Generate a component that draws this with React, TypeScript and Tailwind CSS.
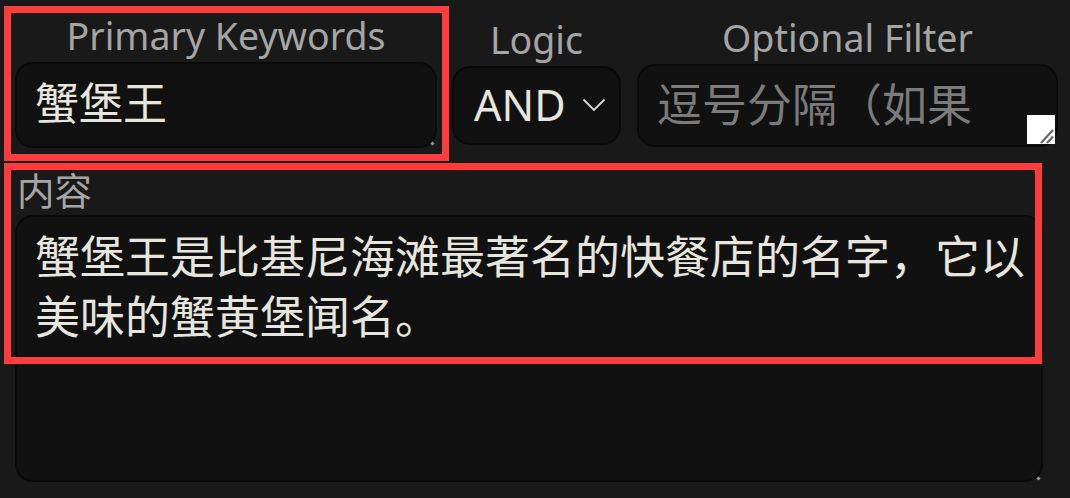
import React from 'react'

const font = { fontFamily: '"Noto Sans", "Noto Sans CJK SC", sans-serif' }

function ResizeDot({ className }: { className: string }) {
  return <div className={`absolute w-[3px] h-[3px] rotate-45 bg-[#9a9a9a] ${className}`} />
}

export default function App() {
  return (
    <div className="relative w-[1070px] h-[498px] bg-[#191919] overflow-hidden" style={font}>
      <div className="flex flex-col pl-[15px] pt-[14px]">
        {/* Top row */}
        <div className="flex items-center">
          <div className="flex flex-col w-[422px]">
            <div className="text-[37.5px] leading-[44px] text-[#a5a5a5] text-center">Primary Keywords</div>
            <div className="relative mt-[4px]">
              <textarea
                readOnly
                value="蟹堡王"
                className="block w-[422px] h-[86px] resize-none overflow-hidden rounded-[18px] border-2 border-[#0a0a0a] bg-[#111111] pl-[18px] pr-[18px] pt-[9px] text-[44px] leading-[60px] text-[#e6e6de] outline-none"
                style={font}
              />
              <ResizeDot className="right-[3px] bottom-[3px]" />
            </div>
          </div>

          <div className="flex flex-col w-[169px] ml-[15px]">
            <div className="text-[37.5px] leading-[44px] text-[#a5a5a5] text-center">Logic</div>
            <div className="mt-[4px] flex items-center justify-between h-[79px] rounded-[18px] border-2 border-[#0a0a0a] bg-[#111111] pl-[20px] pr-[13px]">
              <span className="text-[43px] leading-[60px] text-[#e6e6de]">AND</span>
              <svg width="24" height="14" viewBox="0 0 24 14" fill="none">
                <path d="M1.5 1.5 L12 12 L22.5 1.5" stroke="#d8d8d8" strokeWidth="1.8" />
              </svg>
            </div>
          </div>

          <div className="flex flex-col w-[421px] ml-[16px]">
            <div className="text-[37.5px] leading-[44px] text-[#a5a5a5] text-center">Optional Filter</div>
            <div className="relative mt-[4px] h-[83px] rounded-[18px] border-2 border-[#0a0a0a] bg-[#111111] pl-[18px] pr-[60px] pt-[9px]">
              <textarea
                readOnly
                placeholder="逗号分隔（如果有多个）"
                className="block w-full h-[60px] resize-none overflow-hidden bg-transparent p-0 text-[45px] leading-[60px] text-[#e6e6de] placeholder:text-[#7b7b7b] outline-none"
                style={font}
              />
              <div className="absolute right-[1px] bottom-[1px] w-[28px] h-[29px] bg-white">
                <svg width="28" height="29" viewBox="0 0 28 29" className="block">
                  <path d="M14 28 L26 15" stroke="#666666" strokeWidth="2.2" />
                  <path d="M20 28 L26 21.5" stroke="#666666" strokeWidth="2.2" />
                </svg>
              </div>
            </div>
          </div>
        </div>

        {/* Content */}
        <div className="flex flex-col mt-[21px] w-[1028px]">
          <div className="pl-[2px] text-[37.5px] leading-[44px] text-[#a5a5a5]">内容</div>
          <div className="relative mt-[2px]">
            <textarea
              readOnly
              value="蟹堡王是比基尼海滩最著名的快餐店的名字，它以美味的蟹黄堡闻名。"
              className="block w-[1028px] h-[267px] resize-none overflow-hidden rounded-[18px] border-2 border-[#0a0a0a] bg-[#111111] pl-[18px] pr-[10px] pt-[10px] text-[45px] leading-[60px] text-[#e6e6de] outline-none"
              style={font}
            />
            <ResizeDot className="right-[3px] bottom-[2px]" />
          </div>
        </div>
      </div>

      {/* Annotation boxes */}
      <div className="absolute left-[4px] top-[6px] w-[445px] h-[155px] border-[7px] border-[#ff3b3b]" />
      <div className="absolute left-[4px] top-[163px] w-[1038px] h-[201px] border-[7px] border-[#ff3b3b]" />
    </div>
  )
}
